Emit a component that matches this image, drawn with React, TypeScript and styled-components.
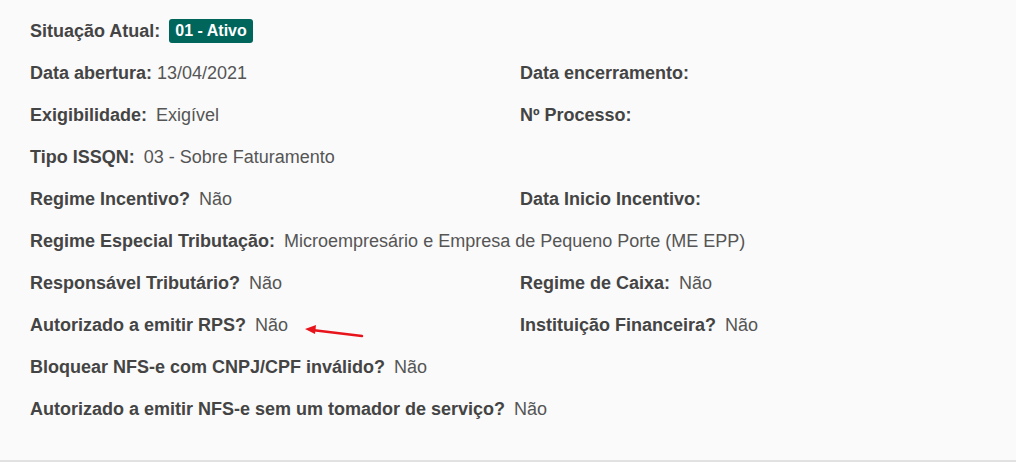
import styled, { createGlobalStyle } from 'styled-components'

const GlobalStyle = createGlobalStyle`
  html, body {
    margin: 0;
    padding: 0;
    background: #fafafa;
  }
  body {
    font-family: "Liberation Sans", Arial, Helvetica, sans-serif;
  }
`

type Field = {
    label: string
    value?: string
    badge?: boolean
    wide?: boolean
    tight?: boolean
    arrow?: boolean
}

const rows: Field[][] = [
    [{ label: 'Situação Atual:', value: '01 - Ativo', badge: true, wide: true }],
    [{ label: 'Data abertura:', value: '13/04/2021', tight: true }, { label: 'Data encerramento:' }],
    [{ label: 'Exigibilidade:', value: 'Exigível' }, { label: 'Nº Processo:' }],
    [{ label: 'Tipo ISSQN:', value: '03 - Sobre Faturamento', wide: true }],
    [{ label: 'Regime Incentivo?', value: 'Não' }, { label: 'Data Inicio Incentivo:' }],
    [{ label: 'Regime Especial Tributação:', value: 'Microempresário e Empresa de Pequeno Porte (ME EPP)', wide: true }],
    [{ label: 'Responsável Tributário?', value: 'Não' }, { label: 'Regime de Caixa:', value: 'Não' }],
    [{ label: 'Autorizado a emitir RPS?', value: 'Não', arrow: true }, { label: 'Instituição Financeira?', value: 'Não' }],
    [{ label: 'Bloquear NFS-e com CNPJ/CPF inválido?', value: 'Não', wide: true }],
    [{ label: 'Autorizado a emitir NFS-e sem um tomador de serviço?', value: 'Não', wide: true }],
]

const App = () => {
    return (
        <>
            <GlobalStyle />
            <Panel>
                <Grid>
                    {rows.map((row, i) =>
                        row.map((f, j) => (
                            <Cell key={`${i}-${j}`} $wide={f.wide}>
                                <Label>{f.label}</Label>
                                {f.badge ? (
                                    <Badge>{f.value}</Badge>
                                ) : f.value ? (
                                    <Value $tight={f.tight}>{f.value}</Value>
                                ) : null}
                                {f.arrow && (
                                    <Arrow width="64" height="14" viewBox="0 0 64 14">
                                        <line x1="58" y1="12" x2="8" y2="6" stroke="#e8141b" strokeWidth="2.5" strokeLinecap="round" />
                                        <polygon points="1,5 12,1 11,10" fill="#e8141b" />
                                    </Arrow>
                                )}
                            </Cell>
                        ))
                    )}
                </Grid>
            </Panel>
        </>
    )
}

export default App

const Panel = styled.div`
    height: 462px;
    box-sizing: border-box;
    border-bottom: 2px solid #e2e2e2;
    background: #fafafa;
    padding: 10px 0 0 30px;
`

const Grid = styled.div`
    display: grid;
    grid-template-columns: 490px 1fr;
    grid-auto-rows: 42px;
`

const Cell = styled.div<{ $wide?: boolean }>`
    position: relative;
    display: flex;
    align-items: center;
    white-space: nowrap;
    grid-column: ${(p) => (p.$wide ? '1 / span 2' : 'auto')};
    font-size: 18px;
`

const Label = styled.span`
    font-weight: bold;
    color: #444;
`

const Value = styled.span<{ $tight?: boolean }>`
    color: #555;
    margin-left: ${(p) => (p.$tight ? '5px' : '9px')};
`

const Badge = styled.span`
    margin-left: 9px;
    background: #00665c;
    color: #fff;
    font-weight: bold;
    font-size: 16px;
    line-height: 24px;
    padding: 0 6px;
    border-radius: 3px;
`

const Arrow = styled.svg`
    position: absolute;
    left: 274px;
    top: 20px;
`
